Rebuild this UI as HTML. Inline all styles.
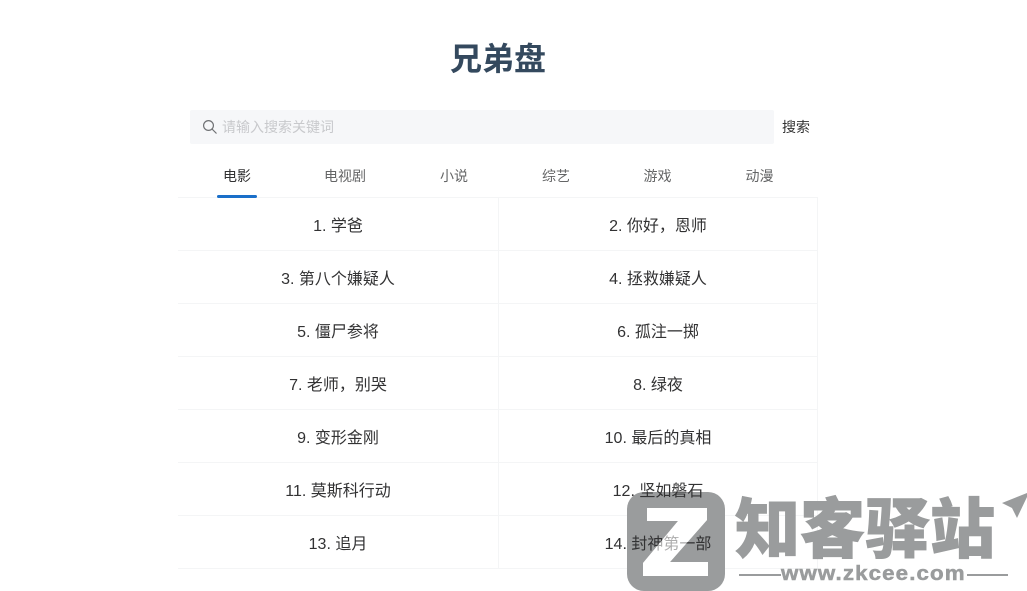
<!DOCTYPE html>
<html lang="zh"><head><meta charset="utf-8"><title>兄弟盘</title>
<style>
html,body{margin:0;padding:0;background:#fff;height:591px;overflow:hidden;}
body{width:1027px;position:relative;font-family:"Liberation Sans","Noto Sans CJK SC",sans-serif;}
.a{position:absolute;white-space:nowrap;}
.c{transform:translateX(-50%);}
.title{left:498px;top:36px;font-size:32px;line-height:46px;font-weight:700;color:#34495e;}
.search{left:190px;top:110px;width:584px;height:34px;background:#f6f7f9;border-radius:2px;}
.ph{left:222px;top:117px;font-size:14px;line-height:20px;color:#c8c9cc;}
.btn{left:782px;top:117px;font-size:14px;line-height:20px;color:#333;}
.tab{top:166px;font-size:14px;line-height:20px;color:#646566;}
.ul{left:217px;top:195px;width:40px;height:3px;background:#1a6fc9;border-radius:2px;}
.h{left:178px;width:640px;height:1px;background:#f4f5f6;}
.v{top:198px;width:1px;height:371px;background:#f4f5f6;}
.i{font-size:16px;line-height:24px;color:#323233;}
.gray{left:627px;top:492px;width:98px;height:99px;border-radius:17px;background:#9a9c9d;}
.wm{left:735px;top:480px;font-family:"Noto Sans CJK SC",sans-serif;font-weight:900;font-size:65px;line-height:88px;color:#9a9c9d;-webkit-text-stroke:1px #9a9c9d;}
.url{left:781px;top:562px;font-family:"Liberation Sans",sans-serif;font-weight:700;font-size:20px;line-height:24px;letter-spacing:1px;color:#9a9c9d;-webkit-text-stroke:.5px #9a9c9d;transform-origin:0 50%;transform:scaleX(1.115);}
.ln{height:2px;top:574px;background:#9a9c9d;}
</style></head>
<body>
<div class="a c title">兄弟盘</div>
<div class="a search"></div>
<svg class="a" style="left:202px;top:119px" width="16" height="16" viewBox="0 0 16 16" fill="none" stroke="#6f7174" stroke-width="1.2"><circle cx="6.5" cy="6.5" r="4.9"/><path d="M10 10L14.5 14.5"/></svg>
<div class="a ph">请输入搜索关键词</div>
<div class="a btn">搜索</div>
<div class="a c tab" style="left:237px;color:#323233">电影</div>
<div class="a c tab" style="left:345px">电视剧</div>
<div class="a c tab" style="left:454px">小说</div>
<div class="a c tab" style="left:556px">综艺</div>
<div class="a c tab" style="left:657.5px">游戏</div>
<div class="a c tab" style="left:759.5px">动漫</div>

<div class="a h" style="top:197px"></div>
<div class="a h" style="top:250px"></div>
<div class="a h" style="top:303px"></div>
<div class="a h" style="top:356px"></div>
<div class="a h" style="top:409px"></div>
<div class="a h" style="top:462px"></div>
<div class="a h" style="top:515px"></div>
<div class="a h" style="top:568px"></div>
<div class="a v" style="left:498px"></div>
<div class="a v" style="left:817px"></div>
<div class="a ul"></div>

<div class="a gray"></div>
<svg class="a" style="left:627px;top:492px" width="98" height="99" viewBox="627 492 98 99"><path d="M647 508H707V520L670 562H708V576H643V563L678 521H647Z" fill="#fff"/></svg>

<div class="a c i" style="left:338px;top:215px">1. 学爸</div>
<div class="a c i" style="left:658px;top:215px">2. 你好，恩师</div>
<div class="a c i" style="left:338px;top:268px">3. 第八个嫌疑人</div>
<div class="a c i" style="left:658px;top:268px">4. 拯救嫌疑人</div>
<div class="a c i" style="left:338px;top:321px">5. 僵尸参将</div>
<div class="a c i" style="left:658px;top:321px">6. 孤注一掷</div>
<div class="a c i" style="left:338px;top:374px">7. 老师，别哭</div>
<div class="a c i" style="left:658px;top:374px">8. 绿夜</div>
<div class="a c i" style="left:338px;top:427px">9. 变形金刚</div>
<div class="a c i" style="left:658px;top:427px">10. 最后的真相</div>
<div class="a c i" style="left:338px;top:480px">11. 莫斯科行动</div>
<div class="a c i" style="left:658px;top:480px">12. 坚如磐石</div>
<div class="a c i" style="left:338px;top:533px">13. 追月</div>
<div class="a c i" style="left:658px;top:533px">14. 封神第一部</div>

<svg class="a" style="left:627px;top:492px" width="98" height="99" viewBox="627 492 98 99"><path d="M647 508H707V520L670 562H708V576H643V563L678 521H647Z" fill="#fff" fill-opacity=".6"/></svg>
<div class="a wm">知客驿站</div>
<svg class="a" style="left:1000px;top:492px" width="27" height="30" viewBox="0 0 27 30"><path d="M2 11L27 1V5L17 26L12 16Z" fill="#9a9c9d"/></svg>
<div class="a ln" style="left:739px;width:42px"></div>
<div class="a url">www.zkcee.com</div>
<div class="a ln" style="left:967px;width:41px"></div>
</body></html>
